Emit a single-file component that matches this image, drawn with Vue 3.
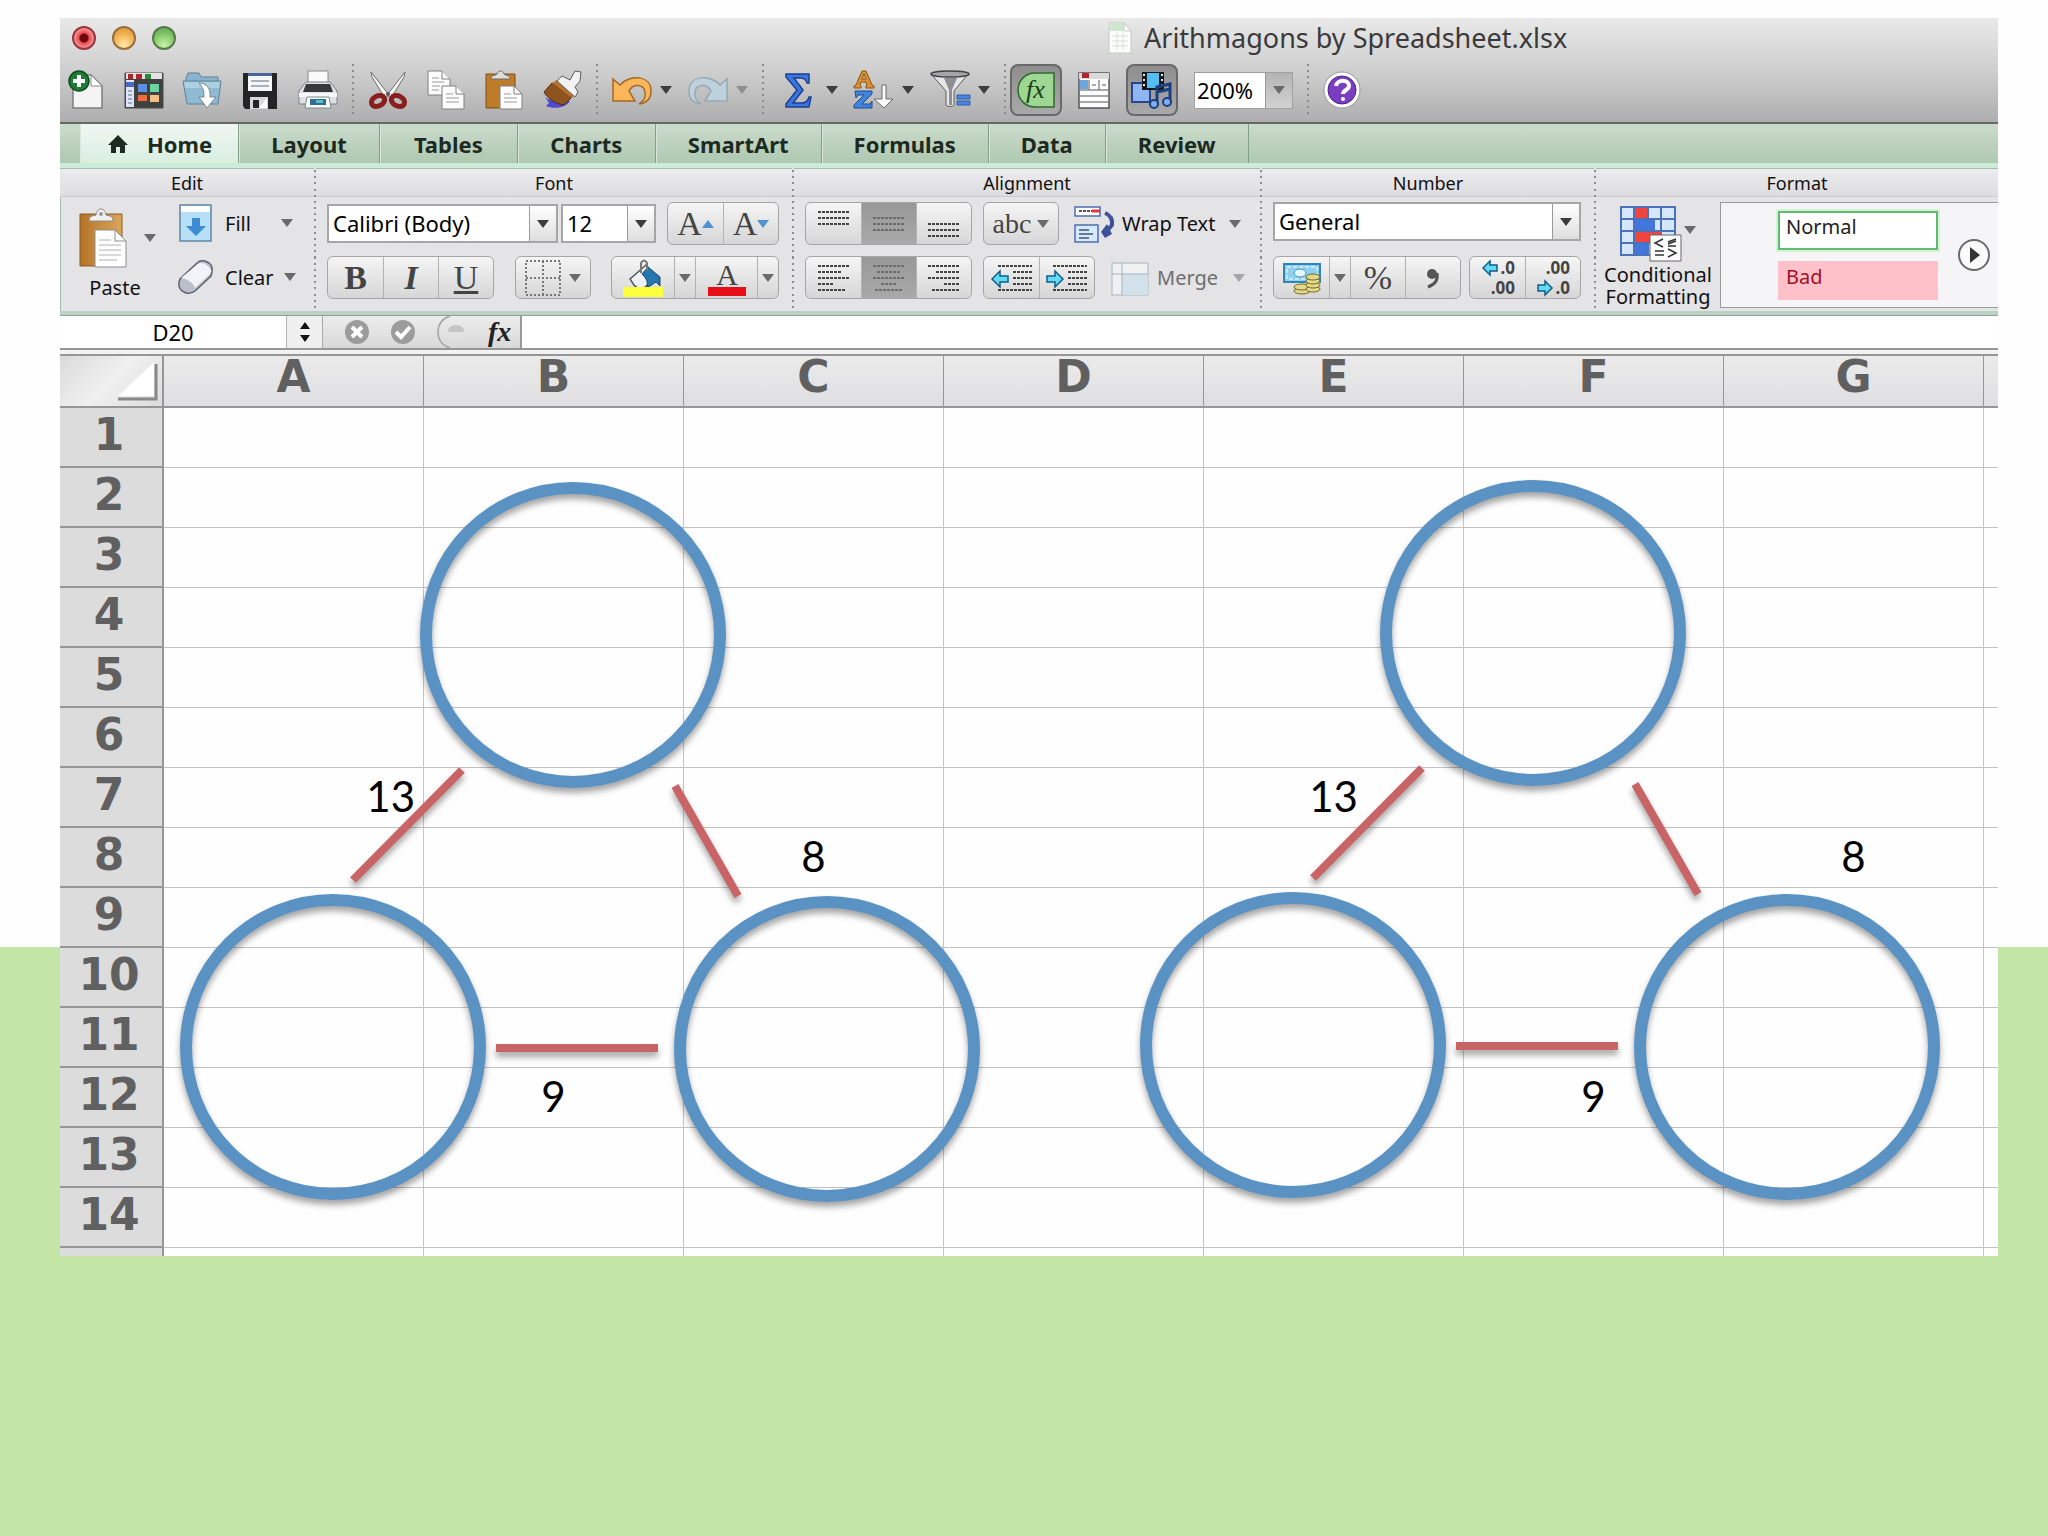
<script setup>
import { ref } from 'vue'

const tabs = ['Layout', 'Tables', 'Charts', 'SmartArt', 'Formulas', 'Data', 'Review']
const columns = ['A', 'B', 'C', 'D', 'E', 'F', 'G']
const rowCount = 15
const cells = {
  A7: { value: '13', align: 'right' },
  E7: { value: '13' },
  C8: { value: '8' },
  G8: { value: '8' },
  B12: { value: '9' },
  F12: { value: '9' },
}
const cellAt = (c, r) => cells[c + r]

const zoom = ref('200%')
const fontName = ref('Calibri (Body)')
const fontSize = ref('12')
const numberFormat = ref('General')

const vertical = [[1, 7, 13], [7, 13, 19], [13, 19, 25]]
const horizontal = [
  [[0, 32], [0, 24], [0, 32], [0, 16], [0, 28]],
  [[0, 32], [4, 28], [0, 32], [8, 24], [2, 30]],
  [[0, 32], [8, 32], [0, 32], [16, 32], [4, 32]],
]
const arithmagons = [[0, 0], [960, -2]]
</script>

<template>
  <div class="page">
    <main class="window">
      <header class="chrome">
        <div class="titlebar">
          <button class="light red" aria-label="Close"></button>
          <button class="light amber" aria-label="Minimise"></button>
          <button class="light green" aria-label="Zoom"></button>
          <h1 class="title">
            <svg width="24" height="32" viewBox="0 0 24 32"><path d="M1 1h15l7 8v22H1z" fill="#fbfdfb" stroke="#c3cbc3" /><path d="M1 1h15l7 8H1z" fill="#cfe6cf" /><path d="M16 1v8h7z" fill="#fff" stroke="#c3cbc3" /><path d="M4 14h16M4 19h16M4 24h16M9 11v17M15 11v17" stroke="#d8e0d8" /></svg>
            Arithmagons by Spreadsheet.xlsx
          </h1>
        </div>

        <div class="toolbar">
          <div class="tools">
            <button aria-label="New workbook">
              <svg width="40" height="40" viewBox="0 0 40 40"><path d="M7 5h18l11 11v22H7z" fill="#f4f4f4" stroke="#7d7d7d" stroke-width="1.5" /><path d="M25 5v11h11z" fill="#fff" stroke="#8a8a8a" /><circle cx="13" cy="11" r="10" fill="#1f7a33" stroke="#0f4d1e" stroke-width="1.5" /><path d="M13 5v12M7 11h12" stroke="#fff" stroke-width="4" /></svg>
            </button>
            <button aria-label="Template gallery">
              <svg width="40" height="40" viewBox="0 0 40 40"><path d="M1 3h38v35H1z" fill="#3f423f" stroke="#4b4b4b" /><path d="M2 3h36v6H2z" fill="#e2e2e2" /><path d="M4 4h5v5H4zM12 4h6v5h-6z" fill="#b3242c" /><path d="M21 4h6v5h-6z" fill="#2a8a3a" /><path d="M2 10h8v27H2z" fill="#dfe5f5" /><path d="M2 12h8v5H2z" fill="#4c68c4" /><path d="M4 21h4M4 25h4M4 29h4M4 33h4" stroke="#8b94b5" stroke-width="1.5" /><path d="M14 14h9v8h-9z" fill="#5a8fe4" /><path d="M26 14h9v8h-9z" fill="#6bd3a0" /><path d="M14 25h9v6h-9z" fill="#f26a3c" /><path d="M26 25h9v7h-9z" fill="#f6bd85" /></svg>
            </button>
            <button aria-label="Open">
              <svg width="40" height="40" viewBox="0 0 40 40"><path d="M4 8l2-5h11l2 4h17v6H4z" fill="#8cb4cc" stroke="#5d8297" /><path d="M1 11h38l-3 23H5z" fill="#8fbad2" stroke="#5d8297" /><path d="M2 12h36l-1 6H3z" fill="#acd0e2" /><path d="M17 13c8 0 12 6 11 14h6l-9 11-8-11h5c0-6-1-10-5-14z" fill="#fff" stroke="#6d8795" /></svg>
            </button>
            <button aria-label="Save">
              <svg width="40" height="40" viewBox="0 0 40 40"><path d="M3 3h34v36H5l-2-3z" fill="#242427" /><path d="M8 3h24v18H8z" fill="#f5f6fa" /><path d="M8 3h24v3H8z" fill="#48629e" /><path d="M11 11h18M11 16h18" stroke="#a9b0bd" stroke-width="2" /><path d="M10 27h18v12H10z" fill="#d9d9dc" /><path d="M13 30h6v8h-6z" fill="#242427" /><path d="M19 38l8-10v10z" fill="#fff" /></svg>
            </button>
            <button aria-label="Print">
              <svg width="40" height="40" viewBox="0 0 40 40"><path d="M10 1h20v14H10z" fill="#fafafa" stroke="#8b8b8b" /><path d="M4 17l4-5h24l4 5 3 4v13H1V21z" fill="#dfe1e5" stroke="#7d7f84" /><path d="M8 14h24l3 8H5z" fill="#38383b" /><path d="M1 23h38v4H1z" fill="#f6f7f9" /><path d="M9 27h22l2 11H7z" fill="#fff" stroke="#7b8790" /><path d="M12 29h16v6H12z" fill="#2f6f96" /><path d="M18 30h7v3h-7z" fill="#59c2c9" /></svg>
            </button>
          </div>
          <i class="dots"></i>
          <div class="tools">
            <button aria-label="Cut">
              <svg width="40" height="40" viewBox="0 0 40 40"><path d="M3 2l18 23-4 3L4 7zM37 2L19 25l4 3L36 7z" fill="#f3f3f3" stroke="#6f6f6f" /><ellipse cx="10" cy="31" rx="7" ry="5" transform="rotate(-28 10 31)" fill="none" stroke="#8a1d1d" stroke-width="5" /><ellipse cx="30" cy="31" rx="7" ry="5" transform="rotate(28 30 31)" fill="none" stroke="#8a1d1d" stroke-width="5" /><circle cx="20" cy="24" r="2" fill="#555" /></svg>
            </button>
            <button aria-label="Copy">
              <svg width="40" height="40" viewBox="0 0 40 40"><g fill="#fcfcfc" stroke="#808080"><path d="M2 1h14l8 8v16H2z" /><path d="M16 1v8h8" /><path d="M16 16h14l8 8v15H16z" /><path d="M30 16v8h8" /></g><path d="M6 8h7M6 12h12M6 16h8M6 20h7M20 24h7M20 28h13M20 32h13" stroke="#9b9b9b" /></svg>
            </button>
            <button aria-label="Paste clipboard">
              <svg width="40" height="40" viewBox="0 0 40 40"><path d="M2 4h29v34H2z" fill="#bd7c2a" stroke="#7d4d12" /><path d="M7 9c0-4 4-3 6-5 1-4 6-4 7 0 2 2 6 1 6 5z" fill="#dedede" stroke="#6f6f6f" /><path d="M16 16h14l8 8v15H16z" fill="#fcfcfc" stroke="#808080" /><path d="M30 16v8h8" fill="none" stroke="#808080" /><path d="M20 24h7M20 28h13M20 32h13" stroke="#9b9b9b" /></svg>
            </button>
            <button aria-label="Format painter">
              <svg width="40" height="40" viewBox="0 0 40 40"><path d="M1 24c3 7 14 8 27 7-5 8-18 8-24 5l3-3z" fill="#4b4ad0" /><path d="M10 13l20 14-8 8C14 34 6 29 2 22z" fill="#8d5420" stroke="#4d2b0b" /><path d="M10 13l5-3 19 13-4 5z" fill="#b9722c" /><path d="M15 11l5-5 8 4 5-9 6 1-1 9-5 6 3 5-3 5z" fill="#f2f2f2" stroke="#5f5f5f" /></svg>
            </button>
          </div>
          <i class="dots"></i>
          <div class="tools drop">
            <button aria-label="Undo">
              <svg width="40" height="40" viewBox="0 0 40 40"><path d="M1 9l7 6C18 4 39 5 39 21c0 8-5 12-12 13 5-3 7-6 6-12-1-8-12-9-16-1l6 10H1z" fill="#fbb65a" stroke="#a0682a" stroke-width="1.5" /></svg>
              <i class="tri"></i>
            </button>
            <button class="faded" aria-label="Redo" disabled>
              <svg width="40" height="40" viewBox="0 0 40 40"><path d="M39 9l-7 6C22 4 1 5 1 21c0 8 5 12 12 13-5-3-7-6-6-12 1-8 12-9 16-1l-6 10h22z" fill="#bdd2dd" stroke="#93a9b5" stroke-width="1.5" /></svg>
              <i class="tri"></i>
            </button>
          </div>
          <i class="dots"></i>
          <div class="tools drop">
            <button aria-label="AutoSum">
              <svg width="40" height="40" viewBox="0 0 40 40"><path d="M8 4h23v9h-2c-1-4-3-5-7-5h-6l9 12-10 13h9c4 0 6-2 7-6h2l-2 10H8v-3l11-14L8 7z" fill="#3b76dd" stroke="#1c3f93" stroke-width="1.5" /></svg>
              <i class="tri"></i>
            </button>
            <button aria-label="Sort">
              <svg width="40" height="40" viewBox="0 0 40 40"><path d="M0 18v-2l2-1L8 1h4l6 14 2 1v2h-8v-2l1-1-1-3H7l-1 3 1 1v2zM8 9h4l-2-5z" fill="#d99032" stroke="#8a5614" /><path d="M1 21h17v3L8 34h8l2-3v7H0v-3l10-10H4l-2 3z" fill="#3f83dd" stroke="#1f4c96" /><path d="M28 15h4v14h7L30 38l-10-9h8z" fill="#fafafa" stroke="#6d6d6d" /></svg>
              <i class="tri"></i>
            </button>
            <button aria-label="Filter">
              <svg width="40" height="40" viewBox="0 0 40 40"><path d="M1 4l15 17v14c2 2 6 2 8 0V21L38 4z" fill="#e6e6e8" stroke="#5c5c5c" /><path d="M14 8l5 12v15h3V20l5-12z" fill="#8f8f92" /><ellipse cx="20" cy="4" rx="19" ry="3" fill="#a6a6a8" stroke="#444" stroke-width="1.5" /><path d="M27 25h13v4H27zM27 31h13v4H27z" fill="#4a86e0" stroke="#2c5cae" /></svg>
              <i class="tri"></i>
            </button>
          </div>
          <i class="dots"></i>
          <div class="tools toggles">
            <button class="pressed" aria-label="Formula builder">
              <svg width="38" height="36" viewBox="0 0 38 36"><path d="M37 1v34H18C8 35 1 27 1 18S8 1 18 1z" fill="#9ed793" stroke="#2f6a2c" stroke-width="1.5" /><text x="9" y="26" class="fx-glyph">fx</text></svg>
            </button>
            <button aria-label="Toolbox">
              <svg width="32" height="38" viewBox="0 0 32 38"><path d="M1 2h30v35H1z" fill="#fdfdfd" stroke="#555" stroke-width="1.5" /><path d="M1 2h30v6H1z" fill="#dadada" /><path d="M4 2h7v5H4z" fill="#b3242c" /><path d="M2 9h8v9H2z" fill="#6ba7dc" /><path d="M2 19h28M2 25h28M2 31h28M11 9v10M21 9v10M14 14h4M24 14h4" stroke="#8d8d90" stroke-width="1.5" /></svg>
            </button>
            <button class="pressed" aria-label="Media browser">
              <svg width="42" height="38" viewBox="0 0 42 38"><path d="M1 12h18v19H1z" fill="#8fb6f0" stroke="#26478c" stroke-width="2" /><path d="M11 1h22v18H11z" fill="#14171c" /><path d="M16 2h12v15H16z" fill="#53bff0" /><path d="M13 3v15M31 3v15" stroke="#dfe8f0" stroke-width="2" stroke-dasharray="2 3" /><path d="M26 33V16l13-3v18M26 21l13-3" fill="none" stroke="#1c3f7f" stroke-width="3" /><circle cx="23" cy="33" r="4" fill="#7fb0f2" stroke="#1c3f7f" stroke-width="2" /><circle cx="36" cy="31" r="4" fill="#7fb0f2" stroke="#1c3f7f" stroke-width="2" /></svg>
            </button>
            <span class="combo zoom">
              <select v-model="zoom" aria-label="Zoom level"><option>200%</option></select>
              <i class="cap"><i class="tri grey"></i></i>
            </span>
          </div>
          <i class="dots"></i>
          <div class="tools">
            <button aria-label="Help">
              <svg width="38" height="40" viewBox="0 0 38 40"><circle cx="19" cy="20" r="18" fill="#fff" stroke="#9a9a9a" /><circle cx="19" cy="20" r="14" fill="#7a3fc0" stroke="#4b2188" /><path d="M13 16c1-7 13-7 13 0 0 4-6 4-6 8" fill="none" stroke="#fff" stroke-width="4" /><circle cx="20" cy="29" r="2" fill="#fff" /></svg>
            </button>
          </div>
        </div>
      </header>

      <nav class="tabs">
        <a href="#home" class="tab active">
          <svg width="20" height="20" viewBox="0 0 20 20"><path d="M10 1l10 10h-3v8h-5v-6H8v6H3v-8H0z" fill="#1d2a22" /></svg>
          Home
        </a>
        <a v-for="t in tabs" :key="t" class="tab" :href="'#' + t.toLowerCase()">{{ t }}</a>
      </nav>

      <section class="ribbon">
        <div class="group edit">
          <h2>Edit</h2>
          <div class="body">
            <button class="big">
              <span class="pic">
                <svg width="48" height="60" viewBox="0 0 48 60"><defs><linearGradient id="board"><stop offset="0" stop-color="#b57427" /><stop offset="1" stop-color="#dba65c" /></linearGradient></defs><path d="M1 6h42v52H1z" fill="url(#board)" stroke="#8c5a1c" /><path d="M10 13c0-6 5-5 7-6 1-8 9-8 10 0 2 1 7 0 7 6z" fill="#f0f0f0" stroke="#8a8a8a" /><circle cx="22" cy="6" r="2" fill="#9a9a9a" /><path d="M16 22h20l11 11v26H16z" fill="#fdfdfd" stroke="#8f8f8f" /><path d="M36 22v11h11" fill="none" stroke="#8f8f8f" /><path d="M20 32h12M20 37h22M20 42h22M20 47h22M20 52h18" stroke="#b4b4b4" /></svg>
                <i class="tri grey"></i>
              </span>
              <span class="caption">Paste</span>
            </button>
            <div class="stack">
              <button class="item">
                <svg width="38" height="38" viewBox="0 0 38 38"><path d="M3 1h31v36H3z" fill="#b5e0f8" stroke="#5f87a4" stroke-width="1.5" /><path d="M4 2h29v6H4z" fill="#fff" /><path d="M15 14h8v8h6l-10 10-10-10h6z" fill="#3d8bd0" /></svg>
                <span>Fill</span><i class="tri grey"></i>
              </button>
              <button class="item">
                <svg width="38" height="38" viewBox="0 0 38 38"><path d="M20 5q3-3 8-2l4 2q4 3 3 9l-1 4-16 15q-4 3-9 2l-4-2q-4-4-3-9l1-3z" fill="#b9bfcb" stroke="#5c6270" stroke-width="1.5" /><path d="M21 6q5-3 10 2t2 8L18 30q-2-5-6-7-4-3-8-3z" fill="#f1f3f8" /></svg>
                <span>Clear</span><i class="tri grey"></i>
              </button>
            </div>
          </div>
        </div>

        <div class="group font">
          <h2>Font</h2>
          <div class="body rows">
            <div class="line">
              <span class="combo name"><select v-model="fontName" aria-label="Font name"><option>Calibri (Body)</option></select><i class="cap"><i class="tri"></i></i></span>
              <span class="combo size"><select v-model="fontSize" aria-label="Font size"><option>12</option></select><i class="cap"><i class="tri"></i></i></span>
              <div class="seg push">
                <button class="serif" aria-label="Grow font">A<i class="tri up blue"></i></button>
                <button class="serif" aria-label="Shrink font">A<i class="tri blue"></i></button>
              </div>
            </div>
            <div class="line spread">
              <div class="seg">
                <button class="serif"><b>B</b></button>
                <button class="serif"><b><em>I</em></b></button>
                <button class="serif"><u>U</u></button>
              </div>
              <div class="seg">
                <button class="borders" aria-label="Borders">
                  <svg width="36" height="36" viewBox="0 0 36 36"><path d="M1 1h34v34H1zM18 1v34M1 18h34" fill="none" stroke="#777" stroke-width="2" stroke-dasharray="2 2" /></svg>
                  <i class="tri grey"></i>
                </button>
              </div>
              <div class="seg">
                <button class="wide" aria-label="Fill colour">
                  <svg width="42" height="38" viewBox="0 0 42 38"><path d="M8 20l16-14 10 12-12 11q-6 2-10-3z" fill="#eef2f4" stroke="#4a565e" stroke-width="1.5" /><path d="M20 15l6-7 12 10v9l-4-4-9 6q2-8-5-14z" fill="#2377ae" stroke="#1d4766" /><path d="M19 14V4q3-5 6 0v8" fill="none" stroke="#777" stroke-width="2" /><path d="M1 28h40v10H1z" fill="#fbff3c" /></svg>
                </button>
                <button class="slim" aria-label="Fill colour options"><i class="tri grey"></i></button>
                <button class="wide" aria-label="Font colour">
                  <svg width="38" height="38" viewBox="0 0 38 38"><text x="19" y="26" text-anchor="middle" class="a-glyph">A</text><path d="M0 28h38v9H0z" fill="#e60f19" /></svg>
                </button>
                <button class="slim" aria-label="Font colour options"><i class="tri grey"></i></button>
              </div>
            </div>
          </div>
        </div>

        <div class="group alignment">
          <h2>Alignment</h2>
          <div class="body rows">
            <div class="line">
              <div class="seg">
                <button v-for="(ys, i) in vertical" :key="i" :class="{ on: i === 1 }" :aria-label="['Top', 'Middle', 'Bottom'][i]">
                  <svg width="32" height="26" viewBox="0 0 32 26"><path v-for="y in ys" :key="y" :d="`M0 ${y}h32`" class="rule" /></svg>
                </button>
              </div>
              <div class="seg gap"><button class="abc serif">abc<i class="tri grey"></i></button></div>
              <button class="item wrap">
                <svg width="42" height="38" viewBox="0 0 42 38"><path d="M1 2h25v9H1z" fill="#fff" stroke="#4f6db0" stroke-width="1.5" /><path d="M5 6h13" stroke="#555" stroke-width="2" stroke-dasharray="3 1" /><path d="M18 6h8" stroke="#e0393e" stroke-width="3" /><path d="M1 20h23v17H1z" fill="#d4e9fa" stroke="#4f6db0" stroke-width="1.5" /><path d="M5 25h10M5 29h14M5 33h10" stroke="#46536b" stroke-width="1.5" /><path d="M31 8q8 3 7 12l-5 6" fill="none" stroke="#3f5299" stroke-width="4" /><path d="M27 27l6-8 5 10-7 4z" fill="#3f5299" /></svg>
                <span>Wrap Text</span><i class="tri grey"></i>
              </button>
            </div>
            <div class="line">
              <div class="seg">
                <button v-for="(rules, i) in horizontal" :key="i" :class="{ on: i === 1 }" :aria-label="['Left', 'Centre', 'Right'][i]">
                  <svg width="32" height="26" viewBox="0 0 32 26"><path v-for="(r, n) in rules" :key="n" :d="`M${r[0]} ${1 + n * 6}H${r[1]}`" class="rule" /></svg>
                </button>
              </div>
              <div class="seg gap">
                <button v-for="flip in [false, true]" :key="flip" :aria-label="flip ? 'Increase indent' : 'Decrease indent'">
                  <svg width="42" height="26" viewBox="0 0 42 26"><path d="M7 1h34M22 7h19M22 13h19M22 19h19M7 25h34" class="rule" /><path :d="flip ? 'M17 14l-8-8v5H1v6h8v5z' : 'M1 14l8-8v5h8v6H9v5z'" fill="#62dcf6" stroke="#135c86" stroke-width="1.5" /></svg>
                </button>
              </div>
              <button class="item wrap dim" disabled>
                <svg width="42" height="38" viewBox="0 0 42 38"><path d="M3 4h36v32H3z" fill="#eef0f2" stroke="#a3b3bd" /><path d="M13 15h26v21H13z" fill="#d3e2ea" /><path d="M13 4v32M3 15h36" stroke="#a3b3bd" /></svg>
                <span>Merge</span><i class="tri grey"></i>
              </button>
            </div>
          </div>
        </div>

        <div class="group number">
          <h2>Number</h2>
          <div class="body rows">
            <div class="line top">
              <span class="combo format"><select v-model="numberFormat" aria-label="Number format"><option>General</option></select><i class="cap"><i class="tri"></i></i></span>
            </div>
            <div class="line spread">
              <div class="seg">
                <button aria-label="Currency">
                  <svg width="38" height="34" viewBox="0 0 38 34"><path d="M1 3h36v18H1z" fill="#8fd0f0" stroke="#2f86b5" stroke-width="2" /><path d="M4 6h30v12H4z" fill="none" stroke="#d9f1fb" stroke-width="1.5" stroke-dasharray="4 2" /><ellipse cx="17" cy="12" rx="6" ry="4" fill="#e6f6fc" stroke="#3e8fb8" /><g fill="#e3d98b" stroke="#756a25"><ellipse cx="19" cy="30" rx="8" ry="3" /><ellipse cx="19" cy="26" rx="8" ry="3" /><ellipse cx="30" cy="28" rx="7" ry="3" /><ellipse cx="30" cy="24" rx="7" ry="3" /><ellipse cx="30" cy="20" rx="7" ry="3" /><ellipse cx="30" cy="16" rx="7" ry="3" /></g></svg>
                </button>
                <button class="slim" aria-label="Currency options"><i class="tri grey"></i></button>
                <button class="serif percent">%</button>
                <button class="serif" aria-label="Thousands separator">
                  <svg width="14" height="22" viewBox="0 0 14 22"><circle cx="6" cy="7" r="5" fill="#555" /><path d="M11 6q2 10-9 14" fill="none" stroke="#555" stroke-width="3" /></svg>
                </button>
              </div>
              <div class="seg">
                <button class="decimal" aria-label="Increase decimal"><span><svg width="16" height="16" viewBox="0 0 16 16"><path d="M1 8l7-7v4h7v6H8v4z" fill="#62dcf6" stroke="#135c86" stroke-width="1.5" /></svg>.0</span><span>.00</span></button>
                <button class="decimal" aria-label="Decrease decimal"><span>.00</span><span><svg width="16" height="16" viewBox="0 0 16 16"><path d="M15 8L8 1v4H1v6h7v4z" fill="#62dcf6" stroke="#135c86" stroke-width="1.5" /></svg>.0</span></button>
              </div>
            </div>
          </div>
        </div>

        <div class="group format-group">
          <h2>Format</h2>
          <div class="body flush">
            <button class="big conditional">
              <span class="pic">
                <svg width="62" height="56" viewBox="0 0 62 56"><path d="M1 1h54v48H1z" fill="#d6e6fb" /><path d="M1 1h54v48H1zM14 1v48M28 1v48M41 1v48M1 13h54M1 25h54M1 37h54" fill="none" stroke="#4b72ba" stroke-width="2" /><path d="M15 2h12v10H15z" fill="#f0453f" /><path d="M15 14h20v10H15z" fill="#4377dd" /><path d="M15 26h26v10H15z" fill="#f0453f" /><path d="M15 38h12v10H15z" fill="#4377dd" /><path d="M30 29h31v26H30z" fill="#fcfcfc" stroke="#666" /><path d="M43 33l-8 4 8 4M35 45h9M35 49h9M56 33l-8 3M48 38l8-3M48 40h8M48 43l8 4-8 4" fill="none" stroke="#333" stroke-width="1.5" /></svg>
                <i class="tri grey"></i>
              </span>
              <span>Conditional<br>Formatting</span>
            </button>
            <div class="gallery">
              <div class="styles">
                <button class="style normal">Normal</button>
                <button class="style bad">Bad</button>
              </div>
              <button class="next" aria-label="More styles"><svg width="32" height="32" viewBox="0 0 32 32"><circle cx="16" cy="16" r="15" fill="#fbfbfb" stroke="#6a6a6a" stroke-width="2" /><path d="M12 8l10 8-10 8z" fill="#333" /></svg></button>
            </div>
          </div>
        </div>
      </section>

      <section class="formula-bar">
        <input class="namebox" value="D20" aria-label="Name box">
        <button class="stepper" aria-label="Recent names"><i class="tri up"></i><i class="tri"></i></button>
        <div class="actions">
          <button aria-label="Cancel"><svg width="26" height="26" viewBox="0 0 26 26"><circle cx="13" cy="13" r="12" fill="#9c9c9c" /><path d="M8 8l10 10M18 8L8 18" stroke="#fff" stroke-width="4" /></svg></button>
          <button aria-label="Enter"><svg width="26" height="26" viewBox="0 0 26 26"><circle cx="13" cy="13" r="12" fill="#9c9c9c" /><path d="M6 13l5 5 9-10" fill="none" stroke="#fff" stroke-width="4" /></svg></button>
          <svg width="32" height="32" viewBox="0 0 32 32"><path d="M14 0Q2 4 2 16t12 16" fill="none" stroke="#a5a5a5" stroke-width="1.5" /><ellipse cx="20" cy="15" rx="8" ry="6" fill="#c4c4c4" /><path d="M12 16h16v6H12z" fill="#e2e2e2" /></svg>
          <em class="fx">fx</em>
        </div>
        <input class="formula" aria-label="Formula">
      </section>

      <section class="sheet">
        <table>
          <colgroup><col class="head-col"><col v-for="c in columns" :key="c" class="data-col"><col></colgroup>
          <thead>
            <tr>
              <th class="corner"><svg width="42" height="38" viewBox="0 0 42 38"><path d="M39 2v35H1" fill="none" stroke="#888" stroke-width="3" /><path d="M37 0v34H1z" fill="#fff" /></svg></th>
              <th v-for="c in columns" :key="c" scope="col">{{ c }}</th>
              <th></th>
            </tr>
          </thead>
          <tbody>
            <tr v-for="r in rowCount" :key="r">
              <th scope="row">{{ r < rowCount ? r : '' }}</th>
              <td v-for="c in columns" :key="c" :class="cellAt(c, r)?.align">{{ cellAt(c, r)?.value }}</td>
              <td></td>
            </tr>
          </tbody>
        </table>
        <svg class="shapes" width="1938" height="900" viewBox="60 356 1938 900">
          <g v-for="(o, i) in arithmagons" :key="i" :transform="`translate(${o[0]} ${o[1]})`" fill="none">
            <g stroke="#5a92c4" stroke-width="12">
              <circle cx="573" cy="635" r="147" /><circle cx="333" cy="1047" r="147" /><circle cx="827" cy="1049" r="147" />
            </g>
            <path d="M462 770L353 880M675 786l63 110M496 1048h162" stroke="#c96466" stroke-width="8" />
          </g>
        </svg>
      </section>
    </main>
  </div>
</template>

<style>
body { background: #c3e6a6; }
</style>

<style scoped>
* { box-sizing: border-box; }
.page {
  min-height: 100vh;
  padding: 18px 50px 0 60px;
  background: linear-gradient(#fefefe 947px, #c3e6a6 947px);
  font-family: "Noto Sans", "Open Sans", sans-serif;
  font-size: 20px;
  color: #111;
}
.window { overflow: hidden; }
button { display: flex; align-items: center; justify-content: center; padding: 0; border: 0; background: none; font: inherit; color: inherit; }
svg { display: block; flex: none; overflow: visible; }

.tri { display: block; flex: none; width: 0; height: 0; border: solid transparent; border-width: 8px 6px 0; border-top-color: #3c3c3c; }
.tri.grey { border-top-color: #6a6a6a; }
.tri.up { border-width: 0 6px 8px; border-bottom-color: #111; }
.tri.blue { border-top-color: #4f93cf; }
.tri.up.blue { border-bottom-color: #4f93cf; }

.chrome { background: linear-gradient(#e9e9e9, #cfcfcf 50%, #aeaeae); border-bottom: 2px solid #686868; }
.titlebar { display: flex; align-items: center; gap: 16px; height: 40px; padding-left: 12px; }
.light { width: 24px; height: 24px; border-radius: 50%; border: 2px solid #777; }
.red { background: radial-gradient(circle at 50% 50%, #6d0a10 4px, #e8474d 5px, #f58a8c 9px); border-color: #96383c; }
.amber { background: radial-gradient(circle at 50% 85%, #ffe9a8, #f2ae4c 60%, #d8923a); border-color: #96703c; }
.green { background: radial-gradient(circle at 50% 85%, #c8f5a8, #7cc462 60%, #5f9f4e); border-color: #55794b; }
.title { display: flex; align-items: center; gap: 12px; margin: 0 0 0 916px; font-size: 27px; line-height: 32px; font-weight: 400; color: #3a3a3a; white-space: nowrap; }

.toolbar { display: flex; align-items: center; height: 64px; padding-left: 6px; }
.tools { display: flex; align-items: center; gap: 18px; }
.drop { gap: 16px; }
.drop button { gap: 8px; }
.faded .tri { border-top-color: #8f8f8f; }
.dots { flex: none; width: 2px; height: 52px; margin: 0 14px; background: repeating-linear-gradient(#8c8c8c 0 2px, transparent 2px 6px); }
.toggles { gap: 16px; margin-left: -10px; }
.pressed { width: 52px; height: 52px; border: 2px solid #696969; border-radius: 8px; background: linear-gradient(#8e8e8e, #a9a9a9); }
.fx-glyph { font: italic 26px "Liberation Serif", serif; fill: #173f18; }
.a-glyph { font: 30px "Liberation Serif", serif; fill: #444; }

.combo { position: relative; display: flex; height: 39px; border: 2px solid #a6a6a6; background: #fff; }
.combo select { appearance: none; width: 100%; padding: 0 0 2px 4px; border: 0; background: none; font: inherit; font-size: 22px; color: #000; }
.cap { position: absolute; inset: 0 0 0 auto; display: grid; place-items: center; width: 27px; border-left: 1px solid #999; background: linear-gradient(#fff, #dedede); pointer-events: none; }
.combo.zoom { width: 99px; height: 37px; border: 1px solid #a0a0a0; }
.combo.zoom select { padding: 0 0 0 2px; }
.zoom .cap { background: linear-gradient(#b4b4b4, #d2d2d2); }
.combo.name { width: 231px; }
.combo.size { width: 95px; }
.combo.format { width: 310px; }

.tabs { display: flex; height: 39px; padding-left: 20px; background: linear-gradient(#cbdccb, #aec8b1); }
.tab { display: flex; align-items: center; justify-content: center; min-width: 138px; padding: 0 32px; border-right: 1px solid #83a08a; box-shadow: inset 1px 0 #d9e8da; font-size: 22px; line-height: 28px; font-weight: 700; color: #1d2a22; text-decoration: none; }
.tab:nth-child(7) { min-width: 0; }
.active { gap: 19px; padding: 0 26px 0 28px; background: linear-gradient(#f0f7f2, #d9eee1); }

.ribbon { display: flex; height: 152px; border-top: 5px solid #cdebd9; border-bottom: 4px solid #b9d2c4; background: #e4e3e5; box-shadow: inset 1px 1px #a3beae, inset 2px 0 #d9ebe1; }
.group { flex: none; padding-top: 1px; border-right: 2px solid transparent; border-image: repeating-linear-gradient(#e4e3e5 0 4px, #8d8d8d 4px 6px) 2; border-width: 0 2px 0 0; }
.group h2 { margin: 0; height: 28px; border-bottom: 1px solid #cdcdcd; background: linear-gradient(#ecebed, #dddcde); font-size: 18px; line-height: 28px; font-weight: 400; text-align: center; }
.edit { width: 256px; }
.font { width: 478px; }
.alignment { width: 468px; }
.number { width: 334px; }
.format-group { flex: 1; min-width: 400px; border-right: 0; border-image: none; }
.body { display: flex; padding: 5px 0 0 11px; }
.rows { flex-direction: column; gap: 11px; padding-right: 13px; }
.line { display: flex; align-items: center; height: 43px; }
.line.top { align-items: flex-start; }
.spread { justify-content: space-between; }
.combo + .combo { margin-left: 3px; }
.push { margin-left: auto; }
.gap { margin-left: 11px; }

.seg { display: flex; height: 43px; border: 1px solid #a6a6a6; border-radius: 6px; background: linear-gradient(#f5f5f6, #d6d6d7); overflow: hidden; }
.seg button { width: 55px; }
.seg button + button { border-left: 1px solid #b3b3b3; }
.seg .on { background: linear-gradient(#989898, #a9a9a9); }
.seg button.wide { width: 62px; }
.seg button.slim { width: 21px; }
.seg .borders { width: 74px; gap: 8px; }
.seg .abc { width: 74px; gap: 6px; font-size: 28px; }
.rule { fill: none; stroke: #444; stroke-width: 2; stroke-dasharray: 3 1; }
.on .rule { stroke: #6c6c6c; }
.serif { font-family: "Liberation Serif", serif; font-size: 34px; line-height: 40px; color: #444; }
.seg .decimal { flex-direction: column; align-items: flex-end; padding-right: 10px; font-size: 17px; line-height: 20px; font-weight: 700; color: #444; }
.decimal span { display: flex; align-items: center; gap: 2px; }

.big { flex-direction: column; justify-content: flex-start; gap: 6px; width: 88px; margin: 6px 0 0 8px; line-height: 28px; align-items: flex-start; }
.caption { width: 72px; text-align: center; }
.pic { display: flex; align-items: center; gap: 17px; }
.stack { display: flex; flex-direction: column; gap: 16px; margin: 2px 0 0 10px; }
.item { gap: 10px; height: 43px; justify-content: flex-start; }
.stack .item { width: 116px; height: 38px; }
.stack .tri { margin-left: auto; }
.wrap { gap: 6px; margin-left: 15px; }
.wrap .tri { margin-left: 8px; }
.dim { margin-left: 14px; color: #6e6e6e; }
.dim span { width: 66px; text-align: left; }
.dim .tri { margin-left: 4px; opacity: .5; }

.flush { height: 112px; padding: 5px 0 0; }
.conditional { gap: 2px; width: 124px; margin: 4px 0 0; align-items: center; line-height: 22px; }
.conditional .pic { gap: 2px; }
.conditional .tri { margin-bottom: 8px; }
.gallery { display: flex; flex: 1; align-items: center; justify-content: flex-end; gap: 20px; height: 106px; padding-right: 8px; border: 1px solid #999; border-right: 0; background: #f5f4f6; }
.styles { display: flex; flex-direction: column; gap: 11px; }
.style { width: 160px; height: 39px; padding: 0 8px 6px; justify-content: flex-start; line-height: 28px; color: #222; }
.normal { border: 2px solid #63b873; background: #fff; box-shadow: 0 0 0 2px #d3f3d6; padding: 0 6px 6px; }
.bad { background: #ffc1c9; color: #9d1029; }

.formula-bar { display: flex; height: 33px; border-top: 1px solid #8ba396; background: #fff; }
.formula-bar input { border: 0; outline: 0; background: #fff; font: inherit; font-size: 22px; color: #000; }
.formula-bar .namebox { width: 226px; padding: 0; text-align: center; }
.stepper { flex-direction: column; gap: 6px; width: 37px; border-left: 1px solid #b5b5b5; border-right: 1px solid #a9a9a9; background: #efefef; }
.stepper .tri { border-width: 7px 5px 0; border-top-color: #111; }
.stepper .up { border-width: 0 5px 7px; }
.actions { display: flex; align-items: center; gap: 20px; width: 199px; padding-left: 21px; border-right: 2px solid #999; background: linear-gradient(#ececec, #d9d9d9); }
.fx { font: italic 700 28px/28px "Liberation Serif", serif; color: #222; }
.formula { flex: 1; min-width: 0; }

.sheet { position: relative; height: 908px; border-top: 2px solid #969696; background: #fefefe; overflow: hidden; }
.sheet::before { content: ""; display: block; height: 4px; background: #f2f2f2; border-bottom: 2px solid #969696; }
table { width: 100%; border-collapse: separate; border-spacing: 0; table-layout: fixed; }
.head-col { width: 104px; }
.data-col { width: 260px; }
th, td { height: 60px; padding: 0; border-right: 1px solid #c4c4c6; border-bottom: 1px solid #c2c2c4; text-align: center; line-height: 50px; }
td { padding-bottom: 4px; font: 42px/50px Lato, sans-serif; color: #000; }
td.right { padding-right: 8px; text-align: right; }
th { font: 700 44px/50px "DejaVu Sans", sans-serif; color: #606060; }
thead th { height: 52px; padding-bottom: 8px; border-right: 1px solid #969696; border-bottom: 2px solid #969696; background: linear-gradient(#ebebec, #dfdfe1); line-height: 42px; }
thead .corner { padding: 6px 3px 6px 0; border-right: 2px solid #969696; background: linear-gradient(135deg, #dadada, #f0f0f0 50%, #dcdcdc); }
.corner svg { margin-left: auto; }
tbody th { padding: 0 4px 4px 0; border-right: 2px solid #969696; border-bottom: 2px solid #969696; background: #dcdcdd; }
tbody tr :last-child, thead tr :last-child { border-right: 0; }
.shapes { position: absolute; left: 0; top: 6px; filter: drop-shadow(0 5px 3px rgba(0, 0, 0, .35)); }
</style>
